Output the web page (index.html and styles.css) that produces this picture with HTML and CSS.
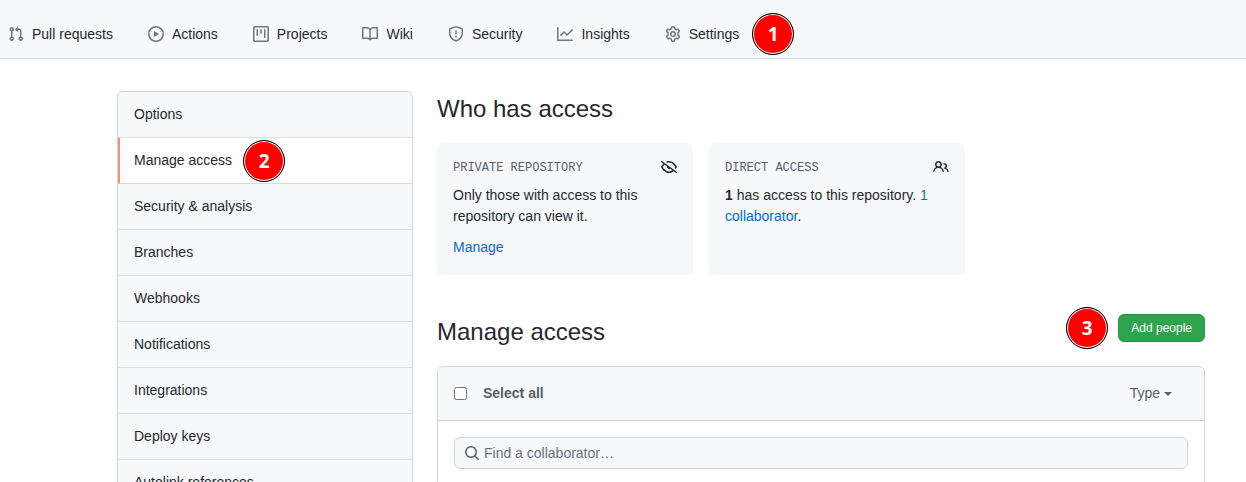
FILE: index.html
```html
<!DOCTYPE html>
<html lang="en">
<head>
<meta charset="utf-8">
<meta name="viewport" content="width=device-width, initial-scale=1">
<title>Manage access</title>
<link rel="stylesheet" href="styles.css">
</head>
<body>
<nav class="repo-nav" aria-label="Repository">
  <a class="repo-nav-item" href="#pulls"><svg class="icon" viewBox="0 0 16 16"><path fill-rule="evenodd" d="M7.177 3.073L9.573.677A.25.25 0 0110 .854v4.792a.25.25 0 01-.427.177L7.177 3.427a.25.25 0 010-.354zM3.75 2.5a.75.75 0 100 1.5.75.75 0 000-1.5zm-2.25.75a2.25 2.25 0 113 2.122v5.256a2.251 2.251 0 11-1.5 0V5.372A2.25 2.25 0 011.5 3.25zM11 2.5h-1V4h1a1 1 0 011 1v5.628a2.251 2.251 0 101.5 0V5A2.5 2.5 0 0011 2.5zm1 10.25a.75.75 0 111.5 0 .75.75 0 01-1.5 0zM3.75 12a.75.75 0 100 1.5.75.75 0 000-1.5z"/></svg>Pull requests</a>
  <a class="repo-nav-item" href="#actions"><svg class="icon" viewBox="0 0 16 16"><path fill-rule="evenodd" d="M1.5 8a6.5 6.5 0 1113 0 6.5 6.5 0 01-13 0zM8 0a8 8 0 100 16A8 8 0 008 0zM6.379 5.227A.25.25 0 006 5.442v5.117a.25.25 0 00.379.214l4.264-2.559a.25.25 0 000-.428L6.379 5.227z"/></svg>Actions</a>
  <a class="repo-nav-item" href="#projects"><svg class="icon" viewBox="0 0 16 16"><path fill-rule="evenodd" d="M1.75 0A1.75 1.75 0 000 1.75v12.5C0 15.216.784 16 1.75 16h12.5A1.75 1.75 0 0016 14.250V1.75A1.75 1.75 0 0014.250 0H1.750zM1.500 1.750a.25.25 0 01.25-.25h12.500a.25.25 0 01.25.25v12.500a.25.25 0 01-.25.25H1.750a.25.25 0 01-.25-.25V1.750zM11.750 3a.75.75 0 00-.75.75v7.500a.75.75 0 001.500 0v-7.500a.75.75 0 00-.75-.75zm-8.250.75a.75.75 0 011.500 0v5.500a.75.75 0 01-1.500 0v-5.500zM8 3a.75.75 0 00-.75.75v3.500a.75.75 0 001.500 0v-3.500A.75.75 0 008 3z"/></svg>Projects</a>
  <a class="repo-nav-item" href="#wiki"><svg class="icon" viewBox="0 0 16 16"><path fill-rule="evenodd" d="M0 1.75A.75.75 0 01.75 1h4.253c1.227 0 2.317.59 3 1.501A3.744 3.744 0 0111.006 1h4.245a.75.75 0 01.75.75v10.5a.75.75 0 01-.75.75h-4.507a2.25 2.25 0 00-1.591.659l-.622.621a.75.75 0 01-1.060 0l-.622-.621A2.25 2.25 0 005.258 13H.75a.75.75 0 01-.75-.75V1.750zm8.755 3a2.250 2.250 0 012.250-2.250H14.500v9h-3.757c-.71 0-1.400.201-1.992.572l.004-7.322zm-1.504 7.324l.004-5.073-.002-2.253A2.250 2.250 0 005.003 2.500H1.500v9h3.757a3.750 3.750 0 011.994.574z"/></svg>Wiki</a>
  <a class="repo-nav-item" href="#security"><svg class="icon" viewBox="0 0 16 16"><path fill-rule="evenodd" d="M7.467.133a1.750 1.750 0 011.066 0l5.250 1.680A1.750 1.750 0 0115 3.480V7c0 1.566-.32 3.182-1.303 4.682-.983 1.498-2.585 2.813-5.032 3.855a1.700 1.700 0 01-1.330 0c-2.447-1.042-4.049-2.357-5.032-3.855C1.320 10.182 1 8.566 1 7V3.480a1.750 1.750 0 011.217-1.667l5.250-1.680zm.61 1.429a.25.25 0 00-.153 0l-5.250 1.680a.25.25 0 00-.174.238V7c0 1.358.275 2.666 1.057 3.860.784 1.194 2.121 2.340 4.366 3.297a.2.2 0 00.154 0c2.245-.956 3.582-2.104 4.366-3.298C13.225 9.666 13.500 8.360 13.500 7V3.480a.25.25 0 00-.174-.237l-5.250-1.680zM9 10.500a1 1 0 11-2 0 1 1 0 012 0zm-.25-5.750a.75.75 0 10-1.500 0v3a.75.75 0 001.500 0v-3z"/></svg>Security</a>
  <a class="repo-nav-item" href="#insights"><svg class="icon" viewBox="0 0 16 16"><path fill-rule="evenodd" d="M1.500 1.750a.75.75 0 00-1.500 0v12.500c0 .414.336.750.750.750h14.500a.75.75 0 000-1.500H1.500V1.750zm14.280 2.530a.75.75 0 00-1.060-1.060L10 7.940 7.530 5.470a.75.75 0 00-1.060 0L3.220 8.720a.75.75 0 001.060 1.060L7 7.060l2.470 2.470a.75.75 0 001.060 0l5.250-5.250z"/></svg>Insights</a>
  <a class="repo-nav-item" href="#settings"><svg class="icon" viewBox="0 0 16 16"><g fill="none" stroke="currentColor" stroke-width="1.5" stroke-linejoin="round"><path d="M6.700 1 Q8 .6 9.300 1 L9.800 2.900 L11.200 3.700 L13.100 3.200 Q14 4.100 14.400 5.400 L13 6.800 V9.200 L14.400 10.600 Q14 11.900 13.100 12.800 L11.200 12.300 L9.800 13.100 L9.300 15 Q8 15.400 6.700 15 L6.200 13.100 L4.800 12.300 L2.900 12.800 Q2 11.900 1.600 10.600 L3 9.200 V6.800 L1.600 5.400 Q2 4.100 2.900 3.200 L4.800 3.700 L6.200 2.900 Z"/><circle cx="8" cy="8" r="2.250"/></g></svg>Settings</a>
  <span class="step step-nav">1</span>
</nav>
<div class="layout">
  <nav class="menu" aria-label="Settings">
    <a class="menu-item" href="#options">Options</a>
    <a class="menu-item selected" href="#access" aria-current="page">Manage access<span class="step">2</span></a>
    <a class="menu-item" href="#analysis">Security &amp; analysis</a>
    <a class="menu-item" href="#branches">Branches</a>
    <a class="menu-item" href="#webhooks">Webhooks</a>
    <a class="menu-item" href="#notifications">Notifications</a>
    <a class="menu-item" href="#integrations">Integrations</a>
    <a class="menu-item" href="#keys">Deploy keys</a>
    <a class="menu-item" href="#autolinks">Autolink references</a>
  </nav>
  <main class="content">
    <h2 class="title">Who has access</h2>
    <div class="cards">
      <section class="card">
        <div class="card-head"><h3 class="card-title">PRIVATE REPOSITORY</h3><svg class="icon" viewBox="0 0 16 16"><path fill-rule="evenodd" d="M.143 2.310a.75.75 0 011.047-.167l14.500 10.500a.75.75 0 11-.88 1.214l-2.248-1.628C11.346 13.190 9.792 14 8 14c-1.981 0-3.670-.992-4.933-2.078C1.797 10.832.880 9.577.430 8.900a1.618 1.618 0 010-1.797c.353-.533.995-1.420 1.868-2.305L.310 3.357A.75.75 0 01.143 2.310zm3.386 3.378a14.210 14.210 0 00-1.850 2.244.120.120 0 00-.022.068c0 .021.006.045.022.068.412.621 1.242 1.750 2.366 2.717C5.175 11.758 6.527 12.500 8 12.500c1.195 0 2.310-.488 3.290-1.191L9.063 9.695A2 2 0 016.058 7.520l-2.529-1.832zM8 3.500c-.516 0-1.017.090-1.499.251a.75.75 0 11-.473-1.423A6.230 6.230 0 018 2c1.981 0 3.670.992 4.933 2.078 1.270 1.091 2.187 2.345 2.637 3.023a1.620 1.620 0 010 1.798c-.110.166-.248.365-.410.587a.75.75 0 11-1.210-.887c.148-.201.272-.382.371-.530a.119.119 0 000-.137c-.412-.621-1.242-1.750-2.366-2.717C10.825 4.242 9.473 3.500 8 3.500z"/></svg></div>
        <p class="card-text">Only those with access to this repository can view it.</p>
        <a class="link" href="#manage">Manage</a>
      </section>
      <section class="card">
        <div class="card-head"><h3 class="card-title">DIRECT ACCESS</h3><svg class="icon" viewBox="0 0 16 16"><path fill-rule="evenodd" d="M5.500 3.500a2 2 0 100 4 2 2 0 000-4zM2 5.500a3.500 3.500 0 115.898 2.549 5.507 5.507 0 013.034 4.084.75.75 0 11-1.482.235 4.001 4.001 0 00-7.900 0 .75.75 0 01-1.482-.236A5.507 5.507 0 013.102 8.050 3.490 3.490 0 012 5.500zM11 4a.75.75 0 100 1.500 1.500 1.500 0 01.666 2.844.75.75 0 00-.416.672v.352a.75.75 0 00.574.730c1.200.289 2.162 1.200 2.522 2.372a.75.75 0 101.434-.440 5.010 5.010 0 00-2.560-3.012A3 3 0 0011 4z"/></svg></div>
        <p class="card-text"><strong>1</strong> has access to this repository. <a class="link" href="#collaborators">1 collaborator</a>.</p>
      </section>
    </div>
    <div class="section-head">
      <h2 class="title">Manage access</h2>
      <div class="actions"><span class="step">3</span><button class="button" type="button">Add people</button></div>
    </div>
    <section class="box">
      <div class="box-head">
        <label class="select-all"><input class="check" type="checkbox">Select all</label>
        <button class="filter" type="button">Type<span class="caret"></span></button>
      </div>
      <div class="box-body">
        <label class="search"><svg class="icon" viewBox="0 0 16 16"><path fill-rule="evenodd" d="M11.500 7a4.499 4.499 0 11-8.998 0A4.499 4.499 0 0111.500 7zm-.82 4.740a6 6 0 111.060-1.060l3.040 3.040a.75.75 0 11-1.060 1.060l-3.040-3.040z"/></svg><input class="search-input" type="text" placeholder="Find a collaborator…" aria-label="Find a collaborator"></label>
      </div>
    </section>
  </main>
</div>
</body>
</html>
```
FILE: styles.css
```css
* { box-sizing: border-box; }
html { overflow: hidden; }
body {
  margin: 0;
  background: #fff;
  color: #24292e;
  font: 14px/21px "Liberation Sans", Arial, sans-serif;
}
.icon { width: 16px; height: 16px; flex: none; fill: currentColor; }
.repo-nav {
  display: flex;
  align-items: center;
  gap: 35px;
  padding: 13px 8px 3px;
  background: #f6f8fa;
  border-bottom: 1px solid #d9dde1;
}
.repo-nav-item {
  display: flex;
  align-items: center;
  gap: 8px;
  line-height: 22px;
  color: inherit;
  text-decoration: none;
  white-space: nowrap;
}
.repo-nav-item .icon { color: #6e7781; }
.step {
  display: flex;
  align-items: center;
  justify-content: center;
  flex: none;
  width: 42px;
  height: 42px;
  border: 1px solid #000;
  border-radius: 50%;
  background: #f00;
  box-shadow: inset 0 0 0 1px #fff;
  color: #fff;
  font: bold 19px/24px "Noto Sans", sans-serif;
}
.step-nav { margin-left: -22px; }
.layout {
  display: flex;
  align-items: flex-start;
  gap: 24px;
  padding: 32px 41px 0 117px;
}
.menu {
  flex: 0 0 296px;
  overflow: hidden;
  border: 1px solid #d1d5da;
  border-radius: 6px;
  background: #f6f8fa;
}
.menu-item {
  display: flex;
  align-items: center;
  gap: 11px;
  height: 46px;
  padding: 0 16px;
  border-bottom: 1px solid #d8dce0;
  color: inherit;
  text-decoration: none;
}
.menu-item.selected {
  padding-left: 14px;
  border-left: 2px solid #fd8c73;
  background: #fff;
}
.content { flex: 1; min-width: 0; }
.title { margin: 0; font-size: 24px; line-height: 36px; font-weight: 400; }
.cards { display: flex; gap: 16px; margin: 16px 0 39px; }
.card {
  flex: 0 0 33.3333%;
  padding: 16px 16px 17px;
  border-radius: 6px;
  background: #f6f8fa;
}
.card-head {
  display: flex;
  align-items: flex-start;
  justify-content: space-between;
  margin-bottom: 8px;
}
.card-title {
  margin: 0;
  color: #586069;
  font: 12px/18px "Liberation Mono", monospace;
}
.card-text { margin: 0 0 10px; }
.link { color: #0969da; text-decoration: none; }
.section-head {
  display: flex;
  justify-content: space-between;
  height: 36px;
  margin-bottom: 16px;
}
.actions { display: flex; gap: 10px; height: 28px; align-items: center; }
.button {
  height: 28px;
  padding: 0 12px;
  border: 1px solid #2a9447;
  border-radius: 6px;
  background: #2ea44f;
  color: #fff;
  font: 12px/20px "Liberation Sans", Arial, sans-serif;
}
.box { border: 1px solid #d1d5da; border-radius: 6px; }
.box-head {
  display: flex;
  align-items: center;
  justify-content: space-between;
  height: 54px;
  padding: 0 32px 0 16px;
  border-bottom: 1px solid #d1d5da;
  border-radius: 6px 6px 0 0;
  background: #f6f8fa;
  color: #586069;
}
.select-all { display: flex; align-items: center; gap: 16px; font-weight: 700; }
.check { width: 13px; height: 13px; margin: 0; }
.filter {
  display: flex;
  align-items: center;
  gap: 4px;
  padding: 0;
  border: 0;
  background: none;
  color: inherit;
  font: inherit;
}
.caret { border: 4px solid transparent; border-top-color: currentColor; border-bottom: 0; }
.box-body { padding: 16px; }
.search {
  display: flex;
  align-items: center;
  gap: 4px;
  height: 32px;
  padding: 0 9px;
  border: 1px solid #d1d5da;
  border-radius: 6px;
  background: #f6f8fa;
  color: #586069;
}
.search-input {
  flex: 1;
  min-width: 0;
  padding: 0;
  border: 0;
  outline: 0;
  background: none;
  color: #24292e;
  font: inherit;
}
.search-input::placeholder { color: #6a737d; opacity: 1; }
```
